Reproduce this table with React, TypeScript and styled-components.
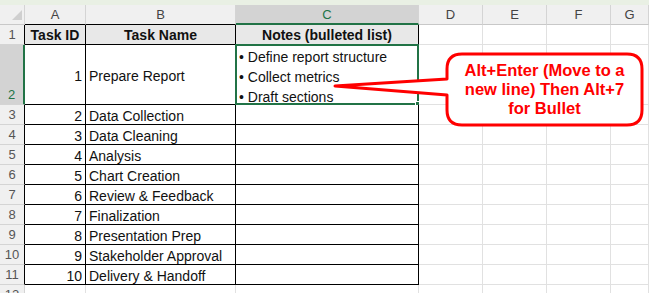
import React from "react";
import styled, { createGlobalStyle, css } from "styled-components";

const GREEN = "#217346";
const GRID = "#e1e1e1";
const HEAD_LINE = "#d4d4d4";

const GlobalStyle = createGlobalStyle`
  html, body { margin: 0; padding: 0; background: #fff; }
  body { font-family: "Liberation Sans", Arial, sans-serif; color: #111; }
  * { box-sizing: border-box; }
`;

const Page = styled.div`
  position: relative;
  width: 649px;
  height: 293px;
  overflow: hidden;
  background: #fff;
`;

const TopBand = styled.div`
  height: 5px;
  background: #e9f0e4;
`;

const Sheet = styled.div`
  display: grid;
  grid-template-columns: 25px 61px 150px 183px 64px 64px 64px 1fr;
  grid-template-rows: 20px 20px 60px repeat(9, 20px) 20px;
`;

const Corner = styled.div`
  position: relative;
  background: #f0f0f0;
  border-right: 1px solid ${HEAD_LINE};
  border-bottom: 1px solid #c8c8c8;
  &::after {
    content: "";
    position: absolute;
    right: 2px;
    bottom: 4px;
    border-style: solid;
    border-width: 0 0 10px 10px;
    border-color: transparent transparent #cfcfcf transparent;
  }
`;

const ColHeader = styled.div<{ $active?: boolean; $table?: boolean }>`
  display: flex;
  align-items: center;
  justify-content: center;
  font-size: 13px;
  background: ${(p) => (p.$active ? "#d3d3d3" : "#f0f0f0")};
  color: ${(p) => (p.$active ? GREEN : "#444")};
  border-right: 1px solid ${HEAD_LINE};
  border-bottom: ${(p) =>
    p.$active ? `2px solid ${GREEN}` : p.$table ? "1px solid #000" : "1px solid #c8c8c8"};
`;

const RowHeader = styled.div<{ $active?: boolean; $table?: boolean }>`
  display: flex;
  align-items: flex-end;
  justify-content: center;
  padding-bottom: 2px;
  font-size: 13px;
  line-height: 15px;
  background: ${(p) => (p.$active ? "#d3d3d3" : "#f0f0f0")};
  color: ${(p) => (p.$active ? GREEN : "#555")};
  border-bottom: 1px solid ${HEAD_LINE};
  border-right: ${(p) =>
    p.$active ? `2px solid ${GREEN}` : p.$table ? "1px solid #000" : `1px solid ${HEAD_LINE}`};
`;

type Align = "left" | "right" | "center";

const Cell = styled.div<{ $head?: boolean; $align?: Align; $table?: boolean; $top?: boolean }>`
  position: relative;
  display: flex;
  align-items: ${(p) => (p.$top ? "flex-start" : "center")};
  justify-content: ${(p) =>
    p.$align === "right" ? "flex-end" : p.$align === "center" ? "center" : "flex-start"};
  padding: ${(p) => (p.$top ? "2px 3px 0 3px" : p.$head ? "1px 3px 0 3px" : "3px 3px 0 3px")};
  font-size: 14px;
  font-weight: ${(p) => (p.$head ? 700 : 400)};
  white-space: nowrap;
  background: ${(p) => (p.$head ? "#e8e8e8" : "#fff")};
  border-right: 1px solid ${(p) => (p.$table ? "#000" : GRID)};
  border-bottom: 1px solid ${(p) => (p.$table ? "#000" : GRID)};
  ${(p) =>
    p.$top &&
    css`
      flex-direction: column;
    `}
`;

const SelectionFrame = styled.div`
  position: absolute;
  left: -1px;
  top: -1px;
  right: -1px;
  bottom: -1px;
  border: 2px solid ${GREEN};
  pointer-events: none;
`;

const FillHandle = styled.div`
  position: absolute;
  right: -4px;
  bottom: -4px;
  width: 7px;
  height: 7px;
  background: ${GREEN};
  border: 1px solid #fff;
`;

const NoteLine = styled.div`
  height: 20px;
  line-height: 20px;
  font-size: 14px;
`;

const CalloutLayer = styled.svg`
  position: absolute;
  left: 0;
  top: 0;
  pointer-events: none;
`;

const CalloutText = styled.div`
  position: absolute;
  left: 447px;
  top: 54px;
  width: 195px;
  height: 71px;
  display: flex;
  flex-direction: column;
  align-items: center;
  justify-content: center;
  color: #f00;
  font-weight: 700;
  font-size: 16.5px;
  line-height: 19px;
  text-align: center;
  white-space: nowrap;
`;

const tasks: [number, string][] = [
  [1, "Prepare Report"],
  [2, "Data Collection"],
  [3, "Data Cleaning"],
  [4, "Analysis"],
  [5, "Chart Creation"],
  [6, "Review & Feedback"],
  [7, "Finalization"],
  [8, "Presentation Prep"],
  [9, "Stakeholder Approval"],
  [10, "Delivery & Handoff"],
];

const notes = ["Define report structure", "Collect metrics", "Draft sections"];
const columns = ["A", "B", "C", "D", "E", "F", "G"];
const extraCols = 4;

function Blank({ n }: { n: number }) {
  return (
    <>
      {Array.from({ length: n }).map((_, i) => (
        <Cell key={i} />
      ))}
    </>
  );
}

export default function App() {
  return (
    <>
      <GlobalStyle />
      <Page>
        <TopBand />
        <Sheet>
          <Corner />
          {columns.map((c, i) => (
            <ColHeader key={c} $active={c === "C"} $table={i < 3}>
              {c}
            </ColHeader>
          ))}

          <RowHeader $table>1</RowHeader>
          <Cell $head $table $align="center">Task ID</Cell>
          <Cell $head $table $align="center">Task Name</Cell>
          <Cell $head $table $align="center">Notes (bulleted list)</Cell>
          <Blank n={extraCols} />

          {tasks.map(([id, name], idx) => {
            const row = idx + 2;
            const first = idx === 0;
            return (
              <React.Fragment key={id}>
                <RowHeader $table $active={first}>{row}</RowHeader>
                <Cell $table $align="right">{id}</Cell>
                <Cell $table>{name}</Cell>
                {first ? (
                  <Cell $table $top>
                    {notes.map((n) => (
                      <NoteLine key={n}>• {n}</NoteLine>
                    ))}
                    <SelectionFrame />
                    <FillHandle />
                  </Cell>
                ) : (
                  <Cell $table />
                )}
                <Blank n={extraCols} />
              </React.Fragment>
            );
          })}

          <RowHeader>12</RowHeader>
          <Blank n={7} />
        </Sheet>

        <CalloutLayer width="649" height="293" viewBox="0 0 649 293">
          <path
            d="M462 54 H627 Q642 54 642 69 V110 Q642 125 627 125 H462 Q447 125 447 110 V95 L335 86 L447 79 V69 Q447 54 462 54 Z"
            fill="#fff"
            stroke="#f00"
            strokeWidth="3"
            strokeLinejoin="round"
          />
        </CalloutLayer>
        <CalloutText>
          <span>Alt+Enter (Move to a</span>
          <span>new line) Then Alt+7</span>
          <span>for Bullet</span>
        </CalloutText>
      </Page>
    </>
  );
}
